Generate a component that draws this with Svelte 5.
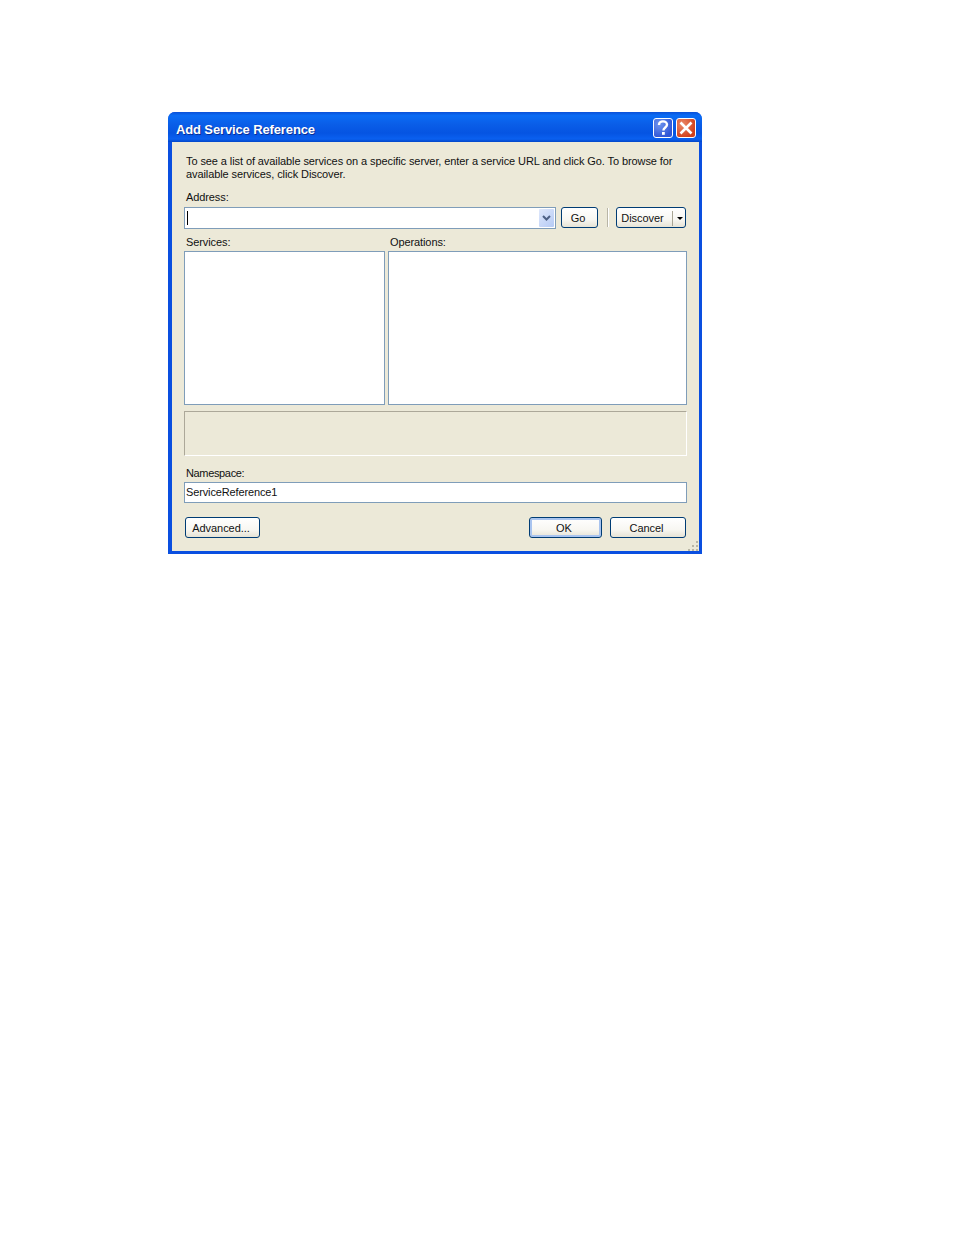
<script lang="ts">
  let address = "";
  let namespace = "ServiceReference1";
</script>

<div class="page">
  <div class="window">
    <div class="titlebar">
      <span class="title">Add Service Reference</span>
      <div class="caption-buttons">
        <button class="cap help" aria-label="Help">
          <svg width="18" height="18" viewBox="0 0 18 18">
            <path d="M5 6 C5 3.2 7 2.4 9 2.4 C11.4 2.4 13 3.8 13 5.8 C13 8.4 9.4 8.6 9.4 11.4" fill="none" stroke="#fff" stroke-width="2.4" />
            <rect x="8" y="13" width="2.8" height="2.8" fill="#fff" />
          </svg>
        </button>
        <button class="cap close" aria-label="Close">
          <svg width="18" height="18" viewBox="0 0 18 18">
            <path d="M3.5 3.5 L14.5 14.5 M14.5 3.5 L3.5 14.5" fill="none" stroke="#fff" stroke-width="2.6" />
          </svg>
        </button>
      </div>
    </div>

    <div class="body">
      <p class="intro">To see a list of available services on a specific server, enter a service URL and click Go. To browse for<br />available services, click Discover.</p>

      <div class="label address-label">Address:</div>
      <div class="address-row">
        <div class="combo">
          <span class="caret"></span>
          <input class="combo-input" bind:value={address} aria-label="Address" />
          <span class="combo-arrow">
            <svg width="9" height="7" viewBox="0 0 9 7">
              <path d="M1 1 L4.5 4.5 L8 1" fill="none" stroke="#4d6185" stroke-width="2" />
            </svg>
          </span>
        </div>
        <button class="btn go">Go</button>
        <span class="sep"></span>
        <div class="btn discover">
          <span class="discover-text">Discover</span>
          <span class="discover-arrow"></span>
        </div>
      </div>

      <div class="panes">
        <div class="pane">
          <div class="label">Services:</div>
          <div class="listbox"></div>
        </div>
        <div class="pane">
          <div class="label">Operations:</div>
          <div class="listbox"></div>
        </div>
      </div>

      <div class="status"></div>

      <div class="label ns-label">Namespace:</div>
      <input class="ns-input" bind:value={namespace} aria-label="Namespace" />

      <div class="actions">
        <button class="btn advanced">Advanced...</button>
        <div class="actions-right">
          <button class="btn ok">OK</button>
          <button class="btn cancel">Cancel</button>
        </div>
      </div>

      <svg class="grip" width="12" height="11" viewBox="0 0 12 11">
        <g fill="#b8b5a4">
          <rect x="9" y="1" width="2" height="2" />
          <rect x="5" y="5" width="2" height="2" />
          <rect x="9" y="5" width="2" height="2" />
          <rect x="1" y="9" width="2" height="2" />
          <rect x="5" y="9" width="2" height="2" />
          <rect x="9" y="9" width="2" height="2" />
        </g>
      </svg>
    </div>
  </div>
</div>

<style>
  :global(body) {
    margin: 0;
    background: #fff;
  }

  .page {
    min-height: 1235px;
    padding: 112px 0 0 168px;
    box-sizing: border-box;
    font-family: "Liberation Sans", Arial, sans-serif;
    font-size: 11px;
    color: #111;
  }

  .window {
    width: 534px;
    height: 442px;
    display: flex;
    flex-direction: column;
    box-sizing: border-box;
    border-radius: 7px 7px 0 0;
    background: #0a4fe0;
    overflow: hidden;
  }

  .titlebar {
    height: 30px;
    flex: none;
    display: flex;
    align-items: center;
    justify-content: space-between;
    padding: 0 6px 0 8px;
    background: linear-gradient(180deg, #0a50d8 0%, #0a6cf5 12%, #0a5ee8 40%, #0554e2 70%, #0a60f0 90%, #0347c8 100%);
  }

  .title {
    font-size: 13px;
    font-weight: bold;
    letter-spacing: -0.13px;
    color: #fff;
    text-shadow: 1px 1px 0 #0a2f96;
    margin-top: 5px;
  }

  .caption-buttons {
    display: flex;
    gap: 3px;
    margin-top: 2px;
  }

  .cap {
    padding: 0;
    border: 1px solid #fff;
    border-radius: 3px;
    box-sizing: content-box;
    display: block;
    width: 18px;
    height: 18px;
    overflow: hidden;
  }

  .cap svg {
    display: block;
  }

  .help {
    background: radial-gradient(circle at 30% 30%, #6f95ee, #2f55d6 75%);
  }

  .close {
    background: radial-gradient(circle at 30% 30%, #ea8a68, #d2401c 75%);
  }

  .body {
    position: relative;
    flex: 1;
    margin: 0 3px 3px 4px;
    background: #ece9d8;
    padding: 13px 12px 0 12px;
    display: flex;
    flex-direction: column;
  }

  .intro {
    margin: 0 0 0 2px;
    line-height: 13px;
    letter-spacing: -0.09px;
    white-space: nowrap;
  }

  .label {
    line-height: 13px;
    margin-left: 2px;
    letter-spacing: -0.1px;
  }

  .address-label {
    margin-top: 10px;
    margin-bottom: 3px;
  }

  .address-row {
    display: flex;
    align-items: flex-start;
  }

  .combo {
    position: relative;
    width: 372px;
    height: 22px;
    flex: none;
    box-sizing: border-box;
    border: 1px solid #7f9db9;
    background: #fff;
    display: flex;
    justify-content: flex-end;
  }

  .combo-input {
    flex: 1;
    min-width: 0;
    border: 0;
    outline: 0;
    padding: 0 3px;
    background: transparent;
    font: inherit;
  }

  .caret {
    position: absolute;
    left: 2px;
    top: 3px;
    width: 1px;
    height: 14px;
    background: #000;
  }

  .combo-arrow {
    width: 15px;
    margin: 1px 1px 1px 0;
    flex: none;
    background: linear-gradient(135deg, #dfe8fb, #b5caf5);
    border-radius: 1px;
    display: flex;
    align-items: center;
    justify-content: center;
  }

  .btn {
    box-sizing: border-box;
    height: 21px;
    flex: none;
    padding: 1px 3px 0 0;
    border: 1px solid #003c74;
    border-radius: 3px;
    background: linear-gradient(180deg, #fff 0%, #f8f7f2 60%, #e6e3d5 100%);
    font: inherit;
    color: #111;
    letter-spacing: -0.05px;
    display: flex;
    align-items: center;
    justify-content: center;
  }

  .go {
    width: 37px;
    margin-left: 5px;
  }

  .sep {
    width: 1px;
    height: 19px;
    margin: 1px 8px 0 9px;
    background: #b8b5a6;
    box-shadow: 1px 0 0 #fff;
  }

  .discover {
    width: 70px;
    padding: 1px 0 0;
    justify-content: flex-start;
  }

  .discover-text {
    width: 51px;
    padding-right: 4px;
    height: 15px;
    line-height: 15px;
    text-align: center;
    border-right: 1px solid #a8a594;
  }

  .discover-arrow {
    width: 0;
    height: 0;
    margin-left: 4px;
    border: 3px solid transparent;
    border-top: 3px solid #000;
    border-bottom: 0;
  }

  .panes {
    display: grid;
    grid-template-columns: 201px 299px;
    gap: 3px;
    margin-top: 7px;
  }

  .pane .label {
    margin-bottom: 2px;
  }

  .listbox {
    height: 154px;
    box-sizing: border-box;
    border: 1px solid #7f9db9;
    background: #fff;
  }

  .status {
    width: 503px;
    height: 45px;
    margin-top: 6px;
    box-sizing: border-box;
    border: 1px solid;
    border-color: #aca899 #fff #fff #aca899;
  }

  .ns-label {
    margin-top: 11px;
    margin-bottom: 2px;
    letter-spacing: -0.35px;
  }

  .ns-input {
    width: 503px;
    height: 21px;
    box-sizing: border-box;
    border: 1px solid #7f9db9;
    outline: 0;
    padding: 0 1px 2px;
    background: #fff;
    font: inherit;
    letter-spacing: -0.13px;
    color: #111;
  }

  .actions {
    display: flex;
    justify-content: space-between;
    margin: 14px 1px 0 1px;
  }

  .advanced {
    width: 75px;
  }

  .actions-right {
    display: flex;
    gap: 8px;
  }

  .ok {
    width: 73px;
    box-shadow: inset 0 0 0 2px #a9c4ef;
  }

  .cancel {
    width: 76px;
  }

  .grip {
    position: absolute;
    right: 0;
    bottom: 0;
  }
</style>
